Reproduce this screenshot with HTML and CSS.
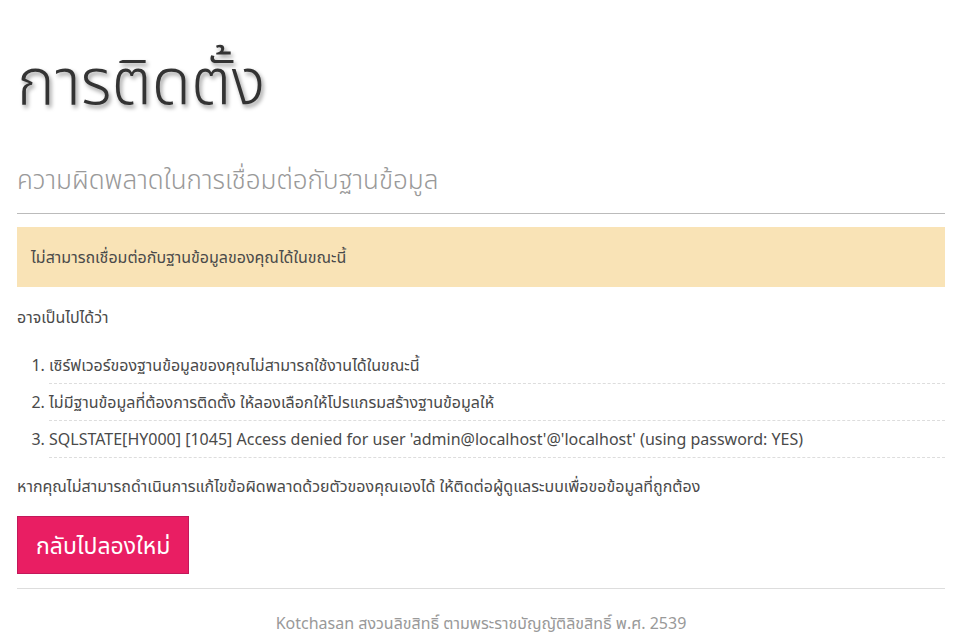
FILE: index.html
```html
<!DOCTYPE html>
<html lang="th">
<head>
  <meta charset="UTF-8" />
  <meta name="viewport" content="width=device-width, initial-scale=1.0" />
  <title>การติดตั้ง</title>
  <link rel="stylesheet" href="styles.css">
</head>
<body>
  <div class="content">
    <h1>การติดตั้ง</h1>
    <h2>ความผิดพลาดในการเชื่อมต่อกับฐานข้อมูล</h2>
    <p class="warning">ไม่สามารถเชื่อมต่อกับฐานข้อมูลของคุณได้ในขณะนี้</p>
    <p>อาจเป็นไปได้ว่า</p>
    <ol>
      <li>เซิร์ฟเวอร์ของฐานข้อมูลของคุณไม่สามารถใช้งานได้ในขณะนี้</li>
      <li>ไม่มีฐานข้อมูลที่ต้องการติดตั้ง ให้ลองเลือกให้โปรแกรมสร้างฐานข้อมูลให้</li>
      <li>SQLSTATE[HY000] [1045] Access denied for user 'admin@localhost'@'localhost' (using password: YES)</li>
    </ol>
    <p>หากคุณไม่สามารถดำเนินการแก้ไขข้อผิดพลาดด้วยตัวของคุณเองได้ ให้ติดต่อผู้ดูแลระบบเพื่อขอข้อมูลที่ถูกต้อง</p>
    <p class="actions"><a class="button" href="index.php">กลับไปลองใหม่</a></p>
  </div>
  <div class="footer">Kotchasan สงวนลิขสิทธิ์ ตามพระราชบัญญัติลิขสิทธิ์ พ.ศ. 2539</div>
</body>
</html>
```

FILE: styles.css
```css
body {
  font-family: "Noto Sans", "Noto Sans Thai", "Liberation Sans", sans-serif;
  font-size: 16px;
  color: #4a4a4a;
  margin: 0;
  padding: 0 10px 0 17px;
  background: #fff;
}
h1 {
  font-size: 64px;
  font-weight: 300;
  color: #333;
  text-shadow: 2px 3px 4px rgba(0, 0, 0, 0.4);
  margin: 42px 0 42px;
  line-height: 1.2;
}
h2 {
  font-size: 26px;
  font-weight: 300;
  color: #999;
  margin: 0 0 13px;
  padding-bottom: 12px;
  border-bottom: 1px solid #bbb;
}
p {
  margin: 0 0 18px;
  line-height: 1.5;
}
.warning {
  background: #f9e3b6;
  padding: 18px 14px;
}
ol {
  margin: 0 0 16px;
  padding-left: 32px;
}
li {
  line-height: 1.5;
  padding: 6px 0;
  border-bottom: 1px dashed #ddd;
}
.actions {
  margin-bottom: 14px;
}
.button {
  display: inline-block;
  background: #e91e63;
  color: #fff;
  text-decoration: none;
  font-size: 23px;
  padding: 11px 18px;
  border: 1px solid #c2185b;
}
.footer {
  border-top: 1px solid #ddd;
  text-align: center;
  color: #999;
  font-size: 16px;
  padding: 23px 0;
}
```
